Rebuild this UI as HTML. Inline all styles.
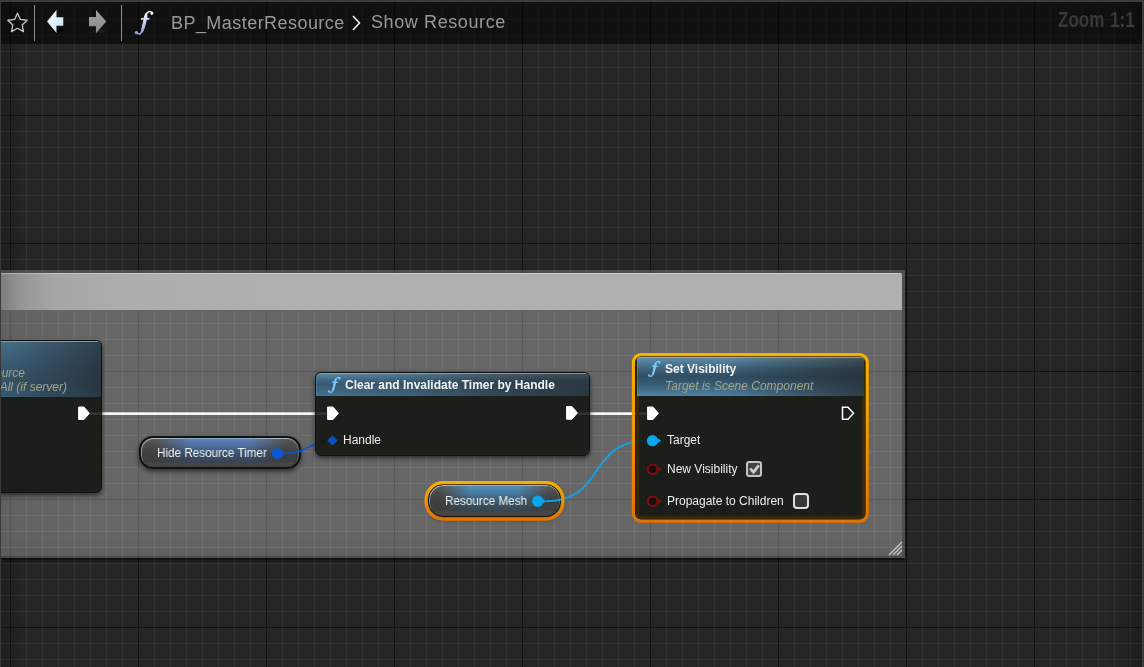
<!DOCTYPE html>
<html><head><meta charset="utf-8">
<style>
*{margin:0;padding:0;box-sizing:border-box}
html,body{width:1144px;height:667px;overflow:hidden;background:#262626}
body{position:relative;font-family:"Liberation Sans",sans-serif}
.abs{position:absolute}
.t{position:absolute;white-space:nowrap;line-height:1;will-change:transform}
.grid{position:absolute;
 background-image:
  linear-gradient(90deg,var(--mj) 1px,transparent 1px),
  linear-gradient(180deg,var(--mj) 1px,transparent 1px),
  linear-gradient(90deg,var(--mn) 1px,transparent 1px),
  linear-gradient(180deg,var(--mn) 1px,transparent 1px);
 background-size:128px 128px,128px 128px,16px 16px,16px 16px;
}
#grid{left:0;top:0;width:1144px;height:667px;--mj:#121212;--mn:#343434;background-color:#262626;
 background-position:10px 115px,10px 115px,10px 3px,10px 3px}
#ring{left:0;top:270px;width:905px;height:288px;background:rgba(238,238,238,0.2);box-shadow:0 2px 4px rgba(0,0,0,0.85)}
#cmtbody{left:0;top:310px;width:902px;height:246px;--mj:#595959;--mn:#717171;background-color:#666;
 background-position:10px -195px,10px -195px,10px -3px,10px -3px}
#cmtbody2{left:0;top:310px;width:902px;height:246px;background:linear-gradient(180deg,rgba(0,0,0,0) 90%,rgba(0,0,0,0.06) 100%),linear-gradient(90deg,rgba(0,0,0,0.06),rgba(0,0,0,0) 80px)}
#cmthdr{left:0;top:273px;width:902px;height:37px;border-radius:0 2px 0 0;
 background:linear-gradient(180deg,rgba(255,255,255,0.35) 0,rgba(255,255,255,0.35) 1px,rgba(255,255,255,0) 1px),
 linear-gradient(90deg,#7c7c7c 0px,#969696 22px,#a6a6a6 55px,#adadad 130px,#b0b0b0 300px,#b0b0b0 100%)}
/* toolbar */
#tb{left:0;top:0;width:1144px;height:44px;background:rgba(0,0,0,0.56)}
.crumb{font-size:18px;color:#999;letter-spacing:0.45px}
/* nodes */
.node{position:absolute;border-radius:6px;background:rgba(15,18,13,0.85);border:2px solid #101010;box-shadow:0 2px 5px rgba(0,0,0,0.6);overflow:hidden}
.hdr{position:absolute;left:0;top:0;right:0;border-radius:4px 4px 0 0;
 box-shadow:inset 0 1px 0 rgba(120,185,230,0.75),inset 1px 0 0 rgba(120,185,230,0.25);
 background:
  linear-gradient(180deg,rgba(255,255,255,0.07) 0%,rgba(255,255,255,0) 35%,rgba(0,0,0,0) 60%,rgba(0,0,0,0.12) 100%),
  linear-gradient(90deg,rgba(38,46,52,0) 0%,rgba(38,46,52,0.15) 30%,rgba(38,46,52,0.6) 70%,rgba(38,46,52,0.8) 100%),
  linear-gradient(180deg,rgba(0,0,0,0) 0%,rgba(0,0,0,0.3) 50%,rgba(0,0,0,0.15) 78%,rgba(0,0,0,0) 100%),
  #4f80a1}
.title{font-weight:700;font-size:12px;color:#f2f2f2}
.sub{font-style:italic;font-size:12px;color:#a1a587}
.pin{font-size:12px;color:#ececec}
.pill{position:absolute;border-radius:16px;border:2px solid #111;overflow:hidden;
 background:linear-gradient(180deg,#5a5a5a 0%,#4a4a4a 25%,#3e3e3e 55%,#3e3e3e 84%,#464646 86%,#444 100%);
 box-shadow:inset 1px 1px 0.5px rgba(255,255,255,0.45),inset -1px 1px 0.5px rgba(255,255,255,0.2),0 2px 5px rgba(0,0,0,0.6)}
.glow{position:absolute;left:0;top:0;right:0;bottom:0;
 background:linear-gradient(180deg,rgba(150,185,225,0.9) 0,rgba(92,132,186,0.95) 1.5px,rgba(80,116,165,0.95) 25%,rgba(58,82,115,0.9) 55%,rgba(56,70,88,0.85) 84%,rgba(56,70,88,0) 86%);
 -webkit-mask-image:linear-gradient(90deg,transparent 8%,#000 32%,#000 68%,transparent 92%);mask-image:linear-gradient(90deg,transparent 8%,#000 32%,#000 68%,transparent 92%)}
</style></head><body>
<div id="grid" class="grid"></div>

<div class="abs" style="left:1104px;top:0;width:38px;height:667px;background:linear-gradient(90deg,rgba(0,0,0,0),rgba(0,0,0,0.2))"></div>
<div class="abs" style="left:1px;top:0;width:30px;height:667px;background:linear-gradient(270deg,rgba(0,0,0,0),rgba(0,0,0,0.18))"></div>
<!-- comment box -->
<div id="ring" class="abs"></div>
<div id="cmtbody" class="grid"></div>
<div id="cmtbody2" class="abs"></div>
<div id="cmthdr" class="abs"></div>
<svg class="abs" style="left:885px;top:540px" width="20" height="18">
 <g stroke="#cacaca" stroke-width="1.3">
  <line x1="4" y1="15" x2="17" y2="2"/>
  <line x1="8" y1="15" x2="17" y2="6"/>
  <line x1="12" y1="15" x2="17" y2="10"/>
 </g>
</svg>

<!-- pills -->
<div class="pill" style="left:139.3px;top:436.3px;width:161.4px;height:33.2px;border-radius:14px;border-width:2px"><div class="glow"></div></div>
<div class="t pin" style="left:157px;top:447.1px;color:#f2f2f2;font-size:12.4px;transform:scaleX(0.944);transform-origin:0 0">Hide Resource Timer</div>

<div class="pill" style="left:427.6px;top:484.2px;width:133.2px;height:32.8px;border-radius:15px;border-width:1.6px;border-color:#1a1208"><div class="glow" style="background:linear-gradient(180deg,rgba(150,195,215,0.85) 0,rgba(80,148,192,0.92) 1.5px,rgba(70,128,170,0.9) 25%,rgba(58,90,112,0.88) 55%,rgba(56,72,84,0.8) 84%,rgba(56,72,84,0) 86%)"></div></div>
<div class="t pin" style="left:445px;top:495px;color:#f2f2f2;font-size:12.4px;transform:scaleX(0.945);transform-origin:0 0">Resource Mesh</div>

<!-- wires layer under nodes -->
<svg class="abs" style="left:0;top:0" width="1144" height="667">
 <line x1="90" y1="413.7" x2="327" y2="413.7" stroke="#f6f6f6" stroke-width="2.7"/>
 <line x1="578" y1="413.7" x2="647" y2="413.7" stroke="#f6f6f6" stroke-width="2.7"/>
 <path d="M286 453.4 C 308 453.4, 310.5 440.4, 332.5 440.4" fill="none" stroke="#0a56d0" stroke-width="1.7"/>
 <path d="M546 501.2 C 606 501.2, 587 440.7, 647 440.7" fill="none" stroke="#10a2e6" stroke-width="1.9"/>
</svg>

<svg class="abs" style="left:420px;top:476px" width="150" height="50">
 <defs><linearGradient id="og2" x1="0" y1="0" x2="0" y2="1"><stop offset="0" stop-color="#f6b000"/><stop offset="1" stop-color="#e27400"/></linearGradient></defs>
 <rect x="6.1" y="6.6" width="136.8" height="36.4" rx="17" fill="none" stroke="url(#og2)" stroke-width="3.3"/>
</svg>
<!-- left partial node -->
<div class="node" style="left:-40px;top:340px;width:141.6px;height:152.5px;border-width:1.5px">
 <div class="hdr" style="height:56px;background:linear-gradient(90deg,rgba(34,42,48,0) 0%,rgba(34,42,48,0.25) 40%,rgba(34,42,48,0.75) 100%),linear-gradient(180deg,rgba(0,0,0,0) 0%,rgba(0,0,0,0.2) 45%,rgba(0,0,0,0.28) 75%,rgba(0,0,0,0.2) 100%),#4d7d9e"></div>
</div>
<div class="t sub" style="left:-49px;top:367px;text-align:right;width:74px">Resource</div>
<div class="t sub" style="left:-44px;top:381.3px;text-align:right;width:111px">To All (if server)</div>

<!-- Clear and Invalidate node -->
<div class="node" style="left:315px;top:372.2px;width:275px;height:83.8px;border-width:1.7px">
 <div class="hdr" style="height:23.2px"></div>
</div>
<div class="t title" style="left:345px;top:379px">Clear and Invalidate Timer by Handle</div>
<div class="t pin" style="left:343px;top:433.5px">Handle</div>

<!-- Set Visibility node -->
<div class="node" style="left:635.7px;top:355.9px;width:229.5px;height:163.6px;border:3.3px solid #36270f;border-radius:5px;overflow:visible;box-shadow:0 0 0 0.8px #000">
 <div class="hdr" style="height:38.8px;left:-1.5px;top:-1.5px;right:-1.5px;border-radius:3px 3px 0 0;background:linear-gradient(180deg,rgba(255,255,255,0.1) 0%,rgba(255,255,255,0) 30%),linear-gradient(90deg,rgba(38,46,52,0) 0%,rgba(38,46,52,0.05) 40%,rgba(38,46,52,0.55) 78%,rgba(38,46,52,0.8) 100%),linear-gradient(180deg,rgba(0,0,0,0) 0%,rgba(0,0,0,0.4) 50%,rgba(0,0,0,0.3) 70%,rgba(0,0,0,0) 100%),#5084a6"></div>
</div>
<svg class="abs" style="left:630px;top:351px" width="242" height="175">
 <defs><linearGradient id="og" x1="0" y1="0" x2="0" y2="1"><stop offset="0" stop-color="#f6b200"/><stop offset="0.5" stop-color="#f29400"/><stop offset="1" stop-color="#e07200"/></linearGradient></defs>
 <rect x="3.45" y="3.6" width="233.75" height="166.6" rx="7.5" fill="none" stroke="url(#og)" stroke-width="3.2"/>
</svg>
<div class="t title" style="left:665px;top:363px">Set Visibility</div>
<div class="t sub" style="left:665px;top:379.5px">Target is Scene Component</div>
<div class="t pin" style="left:667px;top:433.5px">Target</div>
<div class="t pin" style="left:667px;top:462.5px">New Visibility</div>
<div class="t pin" style="left:667px;top:494.5px">Propagate to Children</div>

<!-- pins -->
<svg class="abs" style="left:0;top:0" width="1144" height="667">
 <g fill="#fff" stroke="#fff" stroke-width="1" stroke-linejoin="round">
  <path d="M78.6 407 H84 L89.4 413.3 L84 419.5 H78.6 Z"/>
  <path d="M327.6 407 H333 L338.4 413.3 L333 419.5 H327.6 Z"/>
  <path d="M566.6 406.6 H572 L577.4 412.9 L572 419.2 H566.6 Z"/>
  <path d="M647.6 407 H653 L658.4 413.3 L653 419.5 H647.6 Z"/>
 </g>
 <path d="M842.5 407.2 H848 L853.5 413.3 L848 419.3 H842.5 Z" fill="none" stroke="#fff" stroke-width="1.5"/>
 <!-- Handle diamond -->
 <path d="M332.5 435.2 L337.7 440.4 L332.5 445.6 L327.3 440.4 Z" fill="#0a52c4"/>
 <!-- hide resource timer pin -->
 <circle cx="277.4" cy="453.4" r="5.5" fill="#0a58d8"/>
 <path d="M282.6 451 L286 453.4 L282.6 455.8 Z" fill="#0a58d8"/>
 <!-- resource mesh pin -->
 <circle cx="537.7" cy="501.2" r="5.6" fill="#08a8f0"/>
 <path d="M542.8 498.8 L546.2 501.2 L542.8 503.6 Z" fill="#08a8f0"/>
 <!-- target pin -->
 <circle cx="652.5" cy="440.7" r="5.6" fill="#08a8f0"/>
 <path d="M657.8 438.3 L661.2 440.7 L657.8 443.1 Z" fill="#08a8f0"/>
 <!-- red pins -->
 <circle cx="652.6" cy="469.3" r="4.8" fill="#111" stroke="#8a0808" stroke-width="2"/>
 <path d="M658.5 466.6 L661.5 469.3 L658.5 472 Z" fill="#8c0a0a"/>
 <circle cx="652.6" cy="501.2" r="4.8" fill="#111" stroke="#8a0808" stroke-width="2"/>
 <path d="M658.5 498.5 L661.5 501.2 L658.5 503.9 Z" fill="#8c0a0a"/>
 <!-- checkboxes -->
 <rect x="747" y="462" width="14" height="14" rx="2" fill="#454545" stroke="#c4c4c4" stroke-width="2"/>
 <path d="M750.2 468.6 L753.6 472.2 L758.8 465.4" fill="none" stroke="#cdcdcd" stroke-width="2.8"/>
 <rect x="794" y="494" width="14" height="14" rx="3" fill="#383838" stroke="#e0e0e0" stroke-width="2"/>
</svg>

<!-- f icons in node headers -->
<svg class="abs" style="left:0;top:0" width="1144" height="667">
 <g id="fnode" transform="translate(328,376.8) scale(0.132)" fill="#7cc6fc">
  <path d="M90 12 C 80 0, 62 4, 57 22 L 36 100 C 31 118, 22 124, 10 112" fill="none" stroke="#7cc6fc" stroke-width="9" stroke-linecap="round"/>
  <path d="M92 6 C 98 12, 96 22, 86 22 C 78 22, 78 12, 84 6 Z"/>
  <path d="M2 118 C -4 112, -2 102, 8 102 C 16 102, 16 112, 10 118 Z"/>
  <path d="M56 12 C 68 14, 66 34, 58 60 C 52 82, 48 100, 38 112 C 30 110, 32 94, 38 72 C 44 50, 46 20, 56 12 Z"/>
  <rect x="31" y="37" width="44" height="10"/>
 </g>
 <use href="#fnode" transform="translate(320,-16)"/>
</svg>

<!-- toolbar -->
<div id="tb" class="abs"></div>
<div class="abs" style="left:0;top:0;width:1144px;height:2px;background:#3c3c3c"></div>
<div class="abs" style="left:0;top:0;width:1px;height:667px;background:#3a3a3a"></div>
<div class="abs" style="left:1142px;top:0;width:2px;height:667px;background:#3c3c3c"></div>
<svg class="abs" style="left:0;top:0" width="170" height="44">
 <defs>
  <linearGradient id="ag" x1="0" y1="0" x2="1" y2="1"><stop offset="0" stop-color="#ffffff"/><stop offset="1" stop-color="#bfe0ee"/></linearGradient>
  <linearGradient id="fg" gradientUnits="userSpaceOnUse" x1="0" y1="0" x2="0" y2="125"><stop offset="0.1" stop-color="#f4f6ff"/><stop offset="1" stop-color="#8797dc"/></linearGradient>
 </defs>
 <path d="M17.50 13.20 L20.38 19.44 L27.20 20.25 L22.16 24.91 L23.50 31.65 L17.50 28.30 L11.50 31.65 L12.84 24.91 L7.80 20.25 L14.62 19.44 Z" fill="none" stroke="#c6c6c6" stroke-width="1.3" stroke-linejoin="round"/>
 <line x1="34.5" y1="5" x2="34.5" y2="41" stroke="#8a8a8a" stroke-width="1"/>
 <line x1="121.5" y1="5" x2="121.5" y2="41" stroke="#8a8a8a" stroke-width="1"/>
 <filter id="bl" x="-50%" y="-50%" width="200%" height="200%"><feGaussianBlur stdDeviation="0.8"/></filter>
 <ellipse cx="57" cy="30.8" rx="7" ry="1.6" fill="#000" filter="url(#bl)"/>
 <ellipse cx="99" cy="31" rx="6.5" ry="1.2" fill="rgba(60,60,60,0.6)" filter="url(#bl)"/>
 <path d="M47 21.5 L56.5 10 V17.2 H63.3 V25.8 H56.5 V33 Z" fill="url(#ag)"/>
 <linearGradient id="fwg" x1="0" y1="0" x2="0" y2="1"><stop offset="0" stop-color="#a2a2a2"/><stop offset="1" stop-color="#8a8a8a"/></linearGradient>
 <path d="M89 17 H96 V10 L106.2 21.6 L96 33.2 V26.2 H89 Z" fill="url(#fwg)"/>
 <g transform="translate(135,10.5) scale(0.193,0.2)" fill="url(#fg)">
  <path d="M90 12 C 80 0, 62 4, 57 22 L 36 100 C 31 118, 22 124, 10 112" fill="none" stroke="url(#fg)" stroke-width="8" stroke-linecap="round"/>
  <path d="M92 6 C 98 12, 96 22, 86 22 C 78 22, 78 12, 84 6 Z"/>
  <path d="M2 118 C -4 112, -2 102, 8 102 C 16 102, 16 112, 10 118 Z"/>
  <path d="M56 12 C 68 14, 66 34, 58 60 C 52 82, 48 100, 38 112 C 30 110, 32 94, 38 72 C 44 50, 46 20, 56 12 Z"/>
  <rect x="31" y="37" width="44" height="9"/>
 </g>
</svg>
<div class="t crumb" style="left:171px;top:14px">BP_MasterResource</div>
<svg class="abs" style="left:350px;top:14px" width="14" height="18">
 <path d="M3 2 L9.5 9 L3 16" fill="none" stroke="#f0f0f0" stroke-width="1.6"/>
</svg>
<div class="t crumb" style="left:371px;top:13px;letter-spacing:0.6px">Show Resource</div>
<div class="t" style="left:1057.5px;top:10px;font-size:21.5px;font-weight:700;color:#3a3a3a;transform:scaleX(0.79);transform-origin:0 0">Zoom</div>
<div class="t" style="left:1110px;top:10px;font-size:21.5px;font-weight:700;color:#3a3a3a;transform:scaleX(0.8);transform-origin:0 0">1:1</div>

</body></html>
